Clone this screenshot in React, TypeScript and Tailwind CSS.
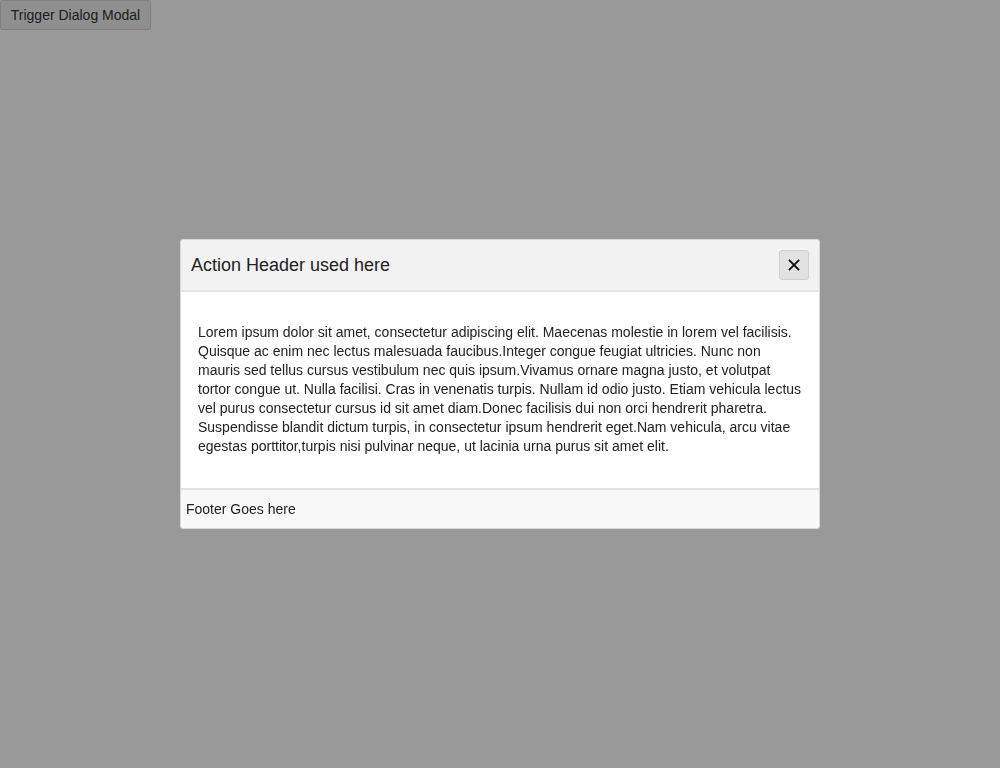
import React from "react";

export default function App() {
  const body =
    "Lorem ipsum dolor sit amet, consectetur adipiscing elit. Maecenas molestie in lorem vel facilisis. Quisque ac enim nec lectus malesuada faucibus.Integer congue feugiat ultricies. Nunc non mauris sed tellus cursus vestibulum nec quis ipsum.Vivamus ornare magna justo, et volutpat tortor congue ut. Nulla facilisi. Cras in venenatis turpis. Nullam id odio justo. Etiam vehicula lectus vel purus consectetur cursus id sit amet diam.Donec facilisis dui non orci hendrerit pharetra. Suspendisse blandit dictum turpis, in consectetur ipsum hendrerit eget.Nam vehicula, arcu vitae egestas porttitor,turpis nisi pulvinar neque, ut lacinia urna purus sit amet elit.";
  return (
    <div
      className="relative h-[768px] w-[1000px] bg-white text-[#333]"
      style={{ fontFamily: '"Liberation Sans", Arial, sans-serif' }}
    >
      <button className="h-[30px] w-[151px] rounded-[3px] border border-[#d4d4d4] bg-[#efefef] text-[14px] text-[#333]">
        Trigger Dialog Modal
      </button>
      <div className="fixed inset-0 flex items-start justify-center bg-black/40 pt-[239px]">
        <div className="flex w-[640px] flex-col rounded-[3px] border border-[#d9d9d9] bg-white">
          <div className="flex h-[52px] items-center justify-between rounded-t-[3px] border-b-2 border-[#e6e6e6] bg-[#f2f2f2] pl-[10px] pr-[10px]">
            <span className="text-[18px] text-[#222]">Action Header used here</span>
            <button className="flex h-[30px] w-[30px] items-center justify-center rounded-[3px] border border-[#d0d0d0] bg-[#e2e2e2]">
              <svg width="12" height="12" viewBox="0 0 12 12">
                <path d="M1.5 1.5L10.5 10.5M10.5 1.5L1.5 10.5" stroke="#111" strokeWidth="1.8" strokeLinecap="square" />
              </svg>
            </button>
          </div>
          <div className="px-[17px] pt-[31px] pb-[32px] text-[14px] leading-[19px] text-[#222]">{body}</div>
          <div className="flex h-[40px] items-center rounded-b-[3px] border-t-2 border-[#e3e3e3] bg-[#f8f8f8] pl-[5px] text-[14px] text-[#222]">
            Footer Goes here
          </div>
        </div>
      </div>
    </div>
  );
}
